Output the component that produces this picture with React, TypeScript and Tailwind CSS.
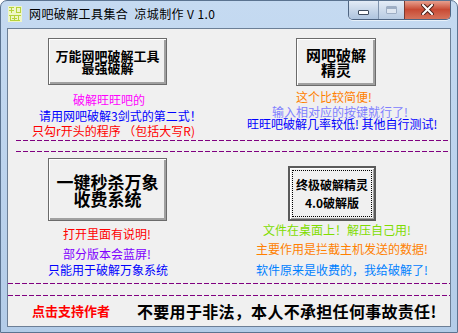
import React from "react";

const font = { fontFamily: '"Noto Sans CJK SC", "Noto Sans", sans-serif' };

function Dash({ className = "" }: { className?: string }) {
  return (
    <div
      className={`h-px bg-[repeating-linear-gradient(to_right,#800080_0px,#800080_5px,transparent_5px,transparent_7px)] ${className}`}
    />
  );
}

function Btn({
  className,
  focused,
  children,
}: {
  className: string;
  focused?: boolean;
  children: React.ReactNode;
}) {
  return (
    <div
      className={`flex shrink-0 items-center justify-center bg-[#f0f0f0] text-center font-bold text-black ${
        focused
          ? "border-2 border-[#5a5a5a] shadow-[inset_1px_1px_0_#fff,inset_-1px_-1px_0_#a0a0a0]"
          : "border border-[#6b6b6b] shadow-[inset_1px_1px_0_#fff,inset_-2px_-2px_0_#a0a0a0]"
      } ${className}`}
    >
      {focused ? (
        <div className="flex h-full w-full items-center justify-center p-[2px]">
          <div className="flex h-full w-full flex-col items-center justify-center border border-dotted border-black">
            {children}
          </div>
        </div>
      ) : (
        <div className="flex flex-col items-center">{children}</div>
      )}
    </div>
  );
}

function AppIcon() {
  return (
    <svg width="14" height="16" viewBox="0 0 14 16" className="shrink-0">
      <rect x="0" y="0" width="14" height="16" fill="#eef6c8" />
      <g fill="#b6d23c">
        <rect x="1" y="1" width="5" height="1" />
        <rect x="3" y="1" width="1" height="6" />
        <rect x="1" y="4" width="5" height="1" />
        <rect x="8" y="1" width="5" height="1" />
        <rect x="8" y="1" width="1" height="6" />
        <rect x="12" y="1" width="1" height="6" />
        <rect x="8" y="6" width="5" height="1" />
        <rect x="1" y="9" width="12" height="1" />
        <rect x="2" y="9" width="1" height="6" />
        <rect x="6" y="10" width="1" height="5" />
        <rect x="10" y="9" width="1" height="6" />
        <rect x="2" y="14" width="10" height="1" />
        <rect x="4" y="12" width="5" height="1" />
      </g>
    </svg>
  );
}

function CaptionButtons() {
  return (
    <div className="ml-auto mr-[6px] -mt-px flex h-[20px] self-start overflow-hidden rounded-b-[5px] border border-t-0 border-[#4f6582] shadow-[0_1px_0_rgba(255,255,255,0.6)]">
      <div className="flex w-[29px] items-end justify-center bg-gradient-to-b from-[#e6eef8] via-[#c9d8ea] to-[#aec4de] pb-[4px]">
        <div className="h-[5px] w-[11px] rounded-[1px] border border-[#3d4a5c] bg-white" />
      </div>
      <div className="flex w-[26px] items-center justify-center border-l border-[#7f93ad] bg-gradient-to-b from-[#e6eef8] via-[#cfdcec] to-[#b7cbe2]">
        <div className="h-[8px] w-[11px] rounded-[1px] border border-[#9eaec4] bg-[#dfe7f1] shadow-[inset_0_2px_0_#9eaec4]" />
      </div>
      <div className="flex w-[46px] items-center justify-center border-l border-[#7a3a30] bg-gradient-to-b from-[#e9a898] via-[#c84a34] to-[#d5735c]">
        <svg width="13" height="11" viewBox="0 0 13 11">
          <path
            d="M2 1 L6.5 5.5 L11 1 M2 10 L6.5 5.5 L11 10"
            stroke="#4a1e18"
            strokeWidth="4"
            strokeLinecap="square"
            fill="none"
          />
          <path
            d="M2 1 L6.5 5.5 L11 1 M2 10 L6.5 5.5 L11 10"
            stroke="#ffffff"
            strokeWidth="2"
            strokeLinecap="square"
            fill="none"
          />
        </svg>
      </div>
    </div>
  );
}

export default function App() {
  return (
    <div className="h-[333px] w-[458px] bg-white" style={font}>
      <div className="flex h-[333px] w-[458px] flex-col overflow-hidden rounded-t-[7px] border border-[#5b7390] bg-gradient-to-b from-[#c5daf1] via-[#bcd3ed] to-[#b3cce8]">
        {/* title bar */}
        <div className="flex h-[27px] shrink-0 items-start">
          <div className="ml-[7px] mt-[5px]">
            <AppIcon />
          </div>
          <div className="ml-[7px] mt-[5px] whitespace-pre text-[12px] leading-[16px] tracking-[0.4px] text-black">
            网吧破解工具集合  凉城制作 V 1.0
          </div>
          <CaptionButtons />
        </div>

        {/* client */}
        <div className="mx-[6px] flex h-[299px] flex-col border border-[#6c7f96] bg-[#f0f0f0] text-[12px]">
          {/* section 1 */}
          <div className="flex h-[111px] shrink-0">
            <div className="flex w-[200px] flex-col items-start leading-[15px]">
              <Btn className="ml-[40px] mt-[9px] h-[47px] w-[119px] text-[13px] leading-[14px]">
                <span>万能网吧破解工具</span>
                <span className="-mt-[2px]">最强破解</span>
              </Btn>
              <div className="ml-[65px] mt-[7px] whitespace-nowrap text-[#ff00ff]">破解旺旺吧的</div>
              <div className="ml-[31px] mt-px whitespace-nowrap text-[#0000ff]">请用网吧破解3剑式的第二式！</div>
              <div className="ml-[24px] whitespace-pre text-[#ff0000]">只勾r开头的程序 （包括大写R)</div>
            </div>
            <div className="flex flex-1 flex-col items-start leading-[12px]">
              <Btn className="ml-[88px] mt-[9px] h-[48px] w-[80px] text-[15px] leading-[15px]">
                <span>网吧破解</span>
                <span>精灵</span>
              </Btn>
              <div className="ml-[88px] mt-[5px] whitespace-nowrap text-[#ff8000]">这个比较简便!</div>
              <div className="ml-[64px] mt-[3px] whitespace-nowrap text-[#8080ff]">输入相对应的按键就行了!</div>
              <div className="ml-[39px] whitespace-nowrap text-[#0000ff]">旺旺吧破解几率较低! 其他自行测试!</div>
            </div>
          </div>

          <Dash className="ml-[8px]" />
          <Dash className="ml-[8px] mt-[10px]" />

          {/* section 2 */}
          <div className="flex h-[131px] shrink-0">
            <div className="flex w-[200px] flex-col items-start leading-[15px]">
              <Btn className="ml-[40px] mt-[6px] h-[63px] w-[119px] text-[17px] leading-[17px]">
                <span>一键秒杀万象</span>
                <span>收费系统</span>
              </Btn>
              <div className="ml-[55px] mt-[5px] whitespace-nowrap text-[#ff0000]">打开里面有说明!</div>
              <div className="ml-[55px] mt-[5px] whitespace-nowrap text-[#8000ff]">部分版本会蓝屏!</div>
              <div className="ml-[40px] mt-px whitespace-nowrap text-[#0000ff]">只能用于破解万象系统</div>
            </div>
            <div className="flex flex-1 flex-col items-start leading-[15px]">
              <Btn focused className="ml-[80px] mt-[14px] h-[55px] w-[88px] text-[12px] leading-[18px]">
                <span>终极破解精灵</span>
                <span>4.0破解版</span>
              </Btn>
              <div className="ml-[55px] mt-px whitespace-nowrap text-[#80dc00]">文件在桌面上！解压自己用!</div>
              <div className="ml-[48px] mt-[4px] whitespace-nowrap text-[#ff8000]">主要作用是拦截主机发送的数据!</div>
              <div className="ml-[48px] mt-[6px] whitespace-nowrap text-[#0080ff]">软件原来是收费的，我给破解了!</div>
            </div>
          </div>

          <Dash />
          <Dash className="mt-[11px]" />

          {/* footer */}
          <div className="flex flex-1 items-center">
            <div className="ml-[24px] whitespace-nowrap text-[13px] font-bold text-[#ff0000]">点击支持作者</div>
            <div className="ml-[27px] whitespace-nowrap text-[16px] font-bold tracking-[0.3px] text-black">
              不要用于非法，本人不承担任何事故责任!
            </div>
          </div>
        </div>
      </div>
    </div>
  );
}
